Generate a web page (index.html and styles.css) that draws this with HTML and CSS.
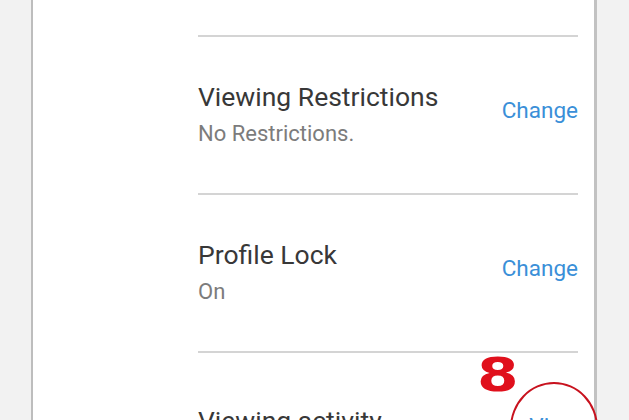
FILE: index.html
```html
<!DOCTYPE html>
<html>
<head>
<meta charset="utf-8">
<link rel="stylesheet" href="styles.css">
</head>
<body>
<div class="page">
  <div class="card">
    <div class="top-gap"></div>
    <div class="row">
      <div class="text">
        <div class="title">Viewing Restrictions</div>
        <div class="sub">No Restrictions.</div>
      </div>
      <a class="action">Change</a>
    </div>
    <div class="row">
      <div class="text">
        <div class="title">Profile Lock</div>
        <div class="sub">On</div>
      </div>
      <a class="action">Change</a>
    </div>
    <div class="row row-last">
      <div class="text">
        <div class="title">Viewing activity</div>
        <div class="sub">&nbsp;</div>
      </div>
      <a class="action">View</a>
    </div>
  </div>
  <div class="mark-num">8</div>
  <div class="mark-circle"></div>
</div>
</body>
</html>
```
FILE: styles.css
```css
html, body {
  margin: 0;
  padding: 0;
  background: #f2f2f2;
  overflow: hidden;
}
.page {
  position: relative;
  width: 629px;
  height: 420px;
  overflow: hidden;
}
.card {
  margin-left: 31px;
  height: 600px;
  background: #fff;
  border-left: 2px solid #bdbdbd;
  border-right: 3px solid #c2c2c2;
  padding-left: 165px;
  padding-right: 16px;
  box-sizing: content-box;
  width: 380px;
  font-family: Roboto, "Liberation Sans", sans-serif;
}
.top-gap {
  height: 35px;
}
.row {
  display: flex;
  align-items: center;
  justify-content: space-between;
  height: 156px;
  border-top: 2px solid #d4d4d4;
}
.text {
  margin-top: -2px;
}
.title {
  font-size: 26.5px;
  color: #383838;
  line-height: 30px;
}
.sub {
  font-size: 22px;
  color: #7c7c7c;
  line-height: 26px;
  margin-top: 9px;
}
.row-last .text {
  padding-top: 16px;
}
.action {
  font-size: 22.5px;
  color: #3a8fd8;
  padding-bottom: 10px;
}
.mark-num {
  position: absolute;
  left: 477px;
  top: 345px;
  font-family: "DejaVu Sans", sans-serif;
  font-weight: bold;
  font-size: 46px;
  color: #e0101c;
  line-height: 60px;
  transform: scaleX(1.3);
  transform-origin: left center;
}
.mark-circle {
  position: absolute;
  left: 510px;
  top: 382px;
  width: 88px;
  height: 92px;
  border: 2px solid #c8121e;
  border-radius: 50%;
  box-sizing: border-box;
}
```
